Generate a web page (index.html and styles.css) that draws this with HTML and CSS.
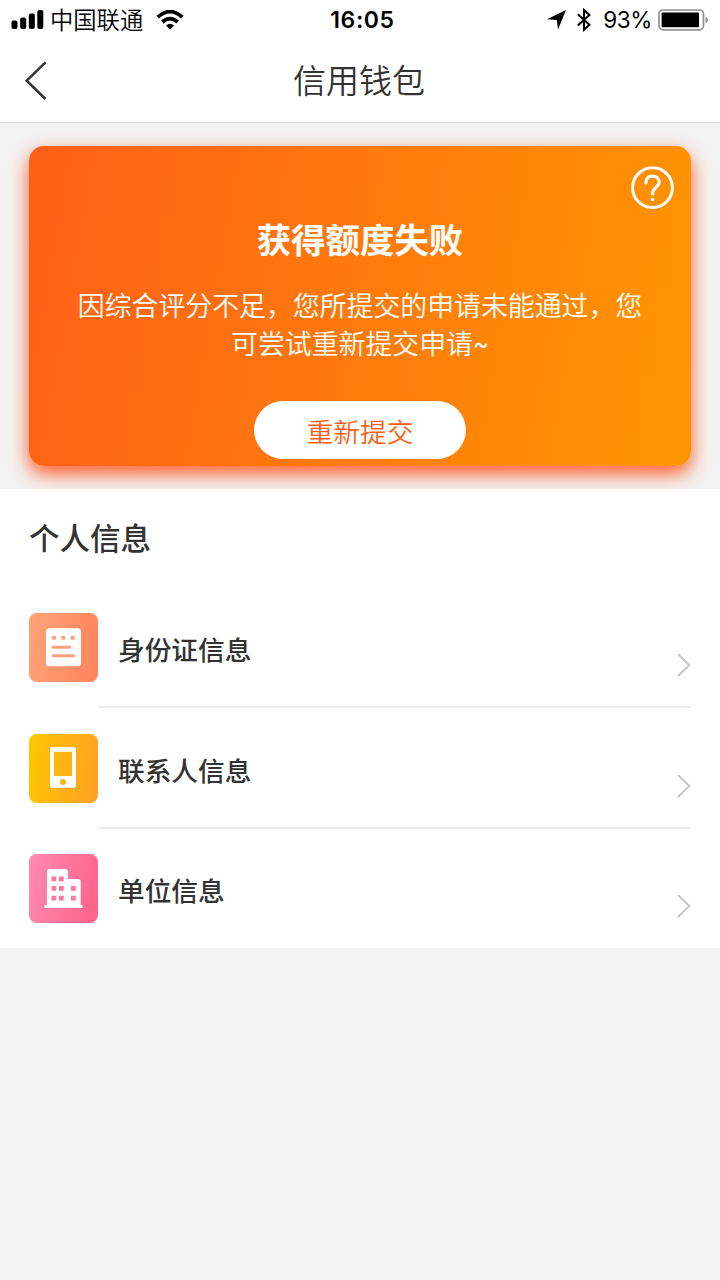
FILE: index.html
```html
<!DOCTYPE html>
<html lang="zh-CN">
<head>
<meta charset="utf-8">
<meta name="viewport" content="width=device-width, initial-scale=1">
<title>信用钱包</title>
<link rel="stylesheet" href="styles.css">
</head>
<body>
<header class="statusbar">
  <div class="status-left">
    <svg class="signal" width="33" height="20" viewBox="0 0 33 20"><rect x="0.500" y="10.500" width="6" height="8.500" rx="2"/><rect x="9.200" y="7.500" width="6" height="11.500" rx="2"/><rect x="17.800" y="3.500" width="6" height="15.500" rx="2"/><rect x="26.300" y="0" width="6" height="19" rx="2"/></svg>
    <span class="carrier">中国联通</span>
    <svg class="wifi" width="28" height="20" viewBox="0 0 28 20"><g fill="none" stroke="#000" stroke-width="3.7"><path d="M1.700 7.200Q14-4 26.300 7.200"/><path d="M6.300 12Q14 5.200 21.700 12"/></g><path d="M10 15.400Q14 12.300 18 15.400L14 19.400Z"/></svg>
  </div>
  <span class="clock">16:05</span>
  <div class="status-right">
    <svg class="location" width="20" height="20" viewBox="0 0 20 20"><path d="M0 9.200 19 0 11 19.500 9.800 9.900Z"/></svg>
    <svg class="bluetooth" width="14" height="24" viewBox="0 0 14 24"><path d="M.8 6.300 12.400 16.800 7 21.800V2L12.400 7.100.8 17.600" fill="none" stroke="#000" stroke-width="2"/></svg>
    <span class="percent">93%</span>
    <svg class="battery" width="51" height="22" viewBox="0 0 51 22"><rect x="1" y="1" width="44.500" height="19.800" rx="4" fill="none" stroke="#919191" stroke-width="1.700"/><rect x="3.600" y="3.600" width="37.400" height="14.600" rx="1"/><path d="M47.500 7.500Q50 8.500 50 11T47.500 14.500Z" fill="#919191"/></svg>
  </div>
</header>
<nav class="navbar">
  <svg class="back" width="24" height="42" viewBox="0 0 24 42"><path d="M21.500 2.300 2.700 20.700 21.500 39" fill="none" stroke="#333" stroke-width="2.500"/></svg>
  <h1 class="nav-title">信用钱包</h1>
</nav>
<main>
  <section class="hero">
    <div class="card">
      <svg class="help" width="44" height="44" viewBox="0 0 44 44" fill="none" stroke="#fff" stroke-linecap="round"><circle cx="22.500" cy="21.700" r="19.900" stroke-width="3"/><path d="M15.800 16.900C15.800 12.600 18.600 10.100 22.500 10.100S29.300 12.700 29.300 16.300C29.300 21.200 22.500 21 22.500 27.900" stroke-width="3.200"/><circle cx="22.500" cy="33.500" r="1.800" fill="#fff" stroke="none"/></svg>
      <h2 class="card-title">获得额度失败</h2>
      <p class="card-text">因综合评分不足，您所提交的申请未能通过，您<br>可尝试重新提交申请<span class="tilde">~</span></p>
      <button class="resubmit">重新提交</button>
    </div>
  </section>
  <section class="profile">
    <h2 class="section-title">个人信息</h2>
    <ul class="list">
      <li class="item">
        <span class="tile tile-id"><svg width="69" height="69" viewBox="0 0 69 69"><rect x="17" y="15.300" width="35" height="38" rx="3.500" fill="#fff"/><g fill="#ffa17e"><rect x="23" y="22.700" width="4" height="4" rx="1"/><rect x="32.200" y="22.700" width="4" height="4" rx="1"/><rect x="41.600" y="22.700" width="4" height="4" rx="1"/><rect x="22.700" y="32.700" width="19.300" height="3" rx="1.400"/><rect x="22.700" y="41.300" width="23.400" height="3" rx="1.400"/></g></svg></span>
        <div class="item-body"><span class="label">身份证信息</span><svg class="chevron" width="14" height="24" viewBox="0 0 14 24"><path d="M1 1 12.400 12 1 23"/></svg></div>
      </li>
      <li class="item">
        <span class="tile tile-contact"><svg width="69" height="69" viewBox="0 0 69 69"><path fill="#fff" fill-rule="evenodd" d="M23.500 13h21q2.500 0 2.500 2.500v36q0 2.500-2.500 2.500h-21Q21 54 21 51.500v-36Q21 13 23.500 13ZM25 17.700V42H43V17.700ZM34 45a3 3 0 1 0 0 6a3 3 0 1 0 0-6Z"/></svg></span>
        <div class="item-body"><span class="label">联系人信息</span><svg class="chevron" width="14" height="24" viewBox="0 0 14 24"><path d="M1 1 12.400 12 1 23"/></svg></div>
      </li>
      <li class="item">
        <span class="tile tile-company"><svg width="69" height="69" viewBox="0 0 69 69"><path fill="#fff" d="M18 51V18q0-3 3-3H36q3 0 3 3v7H49q2.700 0 2.700 2.700V51H52.500q1.200 0 1.200 1.500T52.500 54H16.500q-1.200 0-1.200-1.500T16.500 51Z"/><path fill="#ff779d" d="M22.500 22.500h4.700v4.700h-4.700zM30 22.500h4.700v4.700H30zM22.500 32h4.700v4.700h-4.700zM30 32h4.700v4.700H30zM42 32h4.700v4.700H42zM22.500 41.700h4.700v4.700h-4.700zM30 41.700h4.700v4.700H30zM42 41.700h4.700v4.700H42z"/></svg></span>
        <div class="item-body"><span class="label">单位信息</span><svg class="chevron" width="14" height="24" viewBox="0 0 14 24"><path d="M1 1 12.400 12 1 23"/></svg></div>
      </li>
    </ul>
  </section>
</main>
</body>
</html>
```
FILE: styles.css
```css
* { box-sizing: border-box; }
body {
  margin: 0;
  min-height: 1280px;
  background: #f3f3f3;
  color: #333;
  font-family: "Noto Sans CJK SC", sans-serif;
}
h1, h2, p, ul { margin: 0; padding: 0; }
svg { display: block; flex: none; }

.statusbar {
  height: 40px;
  padding: 0 11px;
  display: grid;
  grid-template-columns: 1fr auto 1fr;
  align-items: center;
  background: #fff;
  color: #000;
}
.status-left, .status-right { display: flex; align-items: center; height: 40px; }
.status-right { justify-content: flex-end; }
.carrier { margin-left: 6px; font-size: 23.300px; font-weight: 350; line-height: 38px; height: 40px; }
.wifi { margin-left: 13px; }
.clock, .percent { font-family: Inter, sans-serif; line-height: 40px; }
.clock { font-size: 23px; font-weight: 600; letter-spacing: .6px; margin-left: 5px; }
.percent { font-size: 22.500px; letter-spacing: -.4px; margin: 0 6px 0 12px; }
.bluetooth { margin-left: 10px; }

.navbar {
  height: 83px;
  padding: 0 26px 0 24px;
  display: grid;
  grid-template-columns: 24px 1fr 24px;
  align-items: center;
  background: #fff;
  border-bottom: 1px solid #d9d9d9;
}
.nav-title { text-align: center; font-size: 33px; font-weight: 350; line-height: 78px; height: 82px; }

.hero { padding: 23px 29px; }
.card {
  position: relative;
  height: 320px;
  padding-top: 66px;
  display: flex;
  flex-direction: column;
  align-items: center;
  border-radius: 15px;
  background: linear-gradient(100deg, #ff5f17, #ff9600);
  box-shadow: 0 8px 19px #ff5c2b;
  color: #fff;
}
.help { position: absolute; top: 20px; right: 17px; }
.card-title { font-size: 34.400px; font-weight: 700; line-height: 52px; }
.card-text { height: 77px; margin-top: 22px; font-size: 26.880px; font-weight: 350; line-height: 38.400px; text-align: center; white-space: nowrap; }
.tilde { font: 400 24px/1 Inter, sans-serif; vertical-align: 2px; }
.resubmit {
  width: 212px;
  height: 58px;
  margin-top: 38px;
  padding: 0;
  border: 0;
  border-radius: 29px;
  background: #fff;
  color: #ff5f17;
  font: 350 26.700px/57px "Noto Sans CJK SC", sans-serif;
}

.profile { height: 459px; padding: 24px 29px 0; background: #fff; position: relative; z-index: -1; }
.section-title { font-size: 30.500px; font-weight: 500; line-height: 48px; }
.list { margin-top: 26px; list-style: none; }
.item { height: 120.700px; display: flex; align-items: flex-start; padding-top: 26px; }
.tile { width: 69px; height: 69px; border-radius: 8px; overflow: hidden; flex: none; }
.tile-id { background: linear-gradient(100deg, #ffa477, #ff825d); }
.tile-contact { background: linear-gradient(100deg, #ffc702, #ff9f22); }
.tile-company { background: linear-gradient(100deg, #ff8baf, #ff618a); }
.item-body {
  flex: 1;
  height: 95px;
  padding-left: 20px;
  display: flex;
  justify-content: space-between;
  align-items: flex-start;
  border-bottom: 2px solid #ededed;
}
.item:last-child .item-body { border-bottom: 0; }
.label { margin-top: 16px; font-size: 26.700px; font-weight: 500; line-height: 40px; }
.chevron { margin-top: 40px; fill: none; stroke: #c7c7c7; stroke-width: 2; }
```
